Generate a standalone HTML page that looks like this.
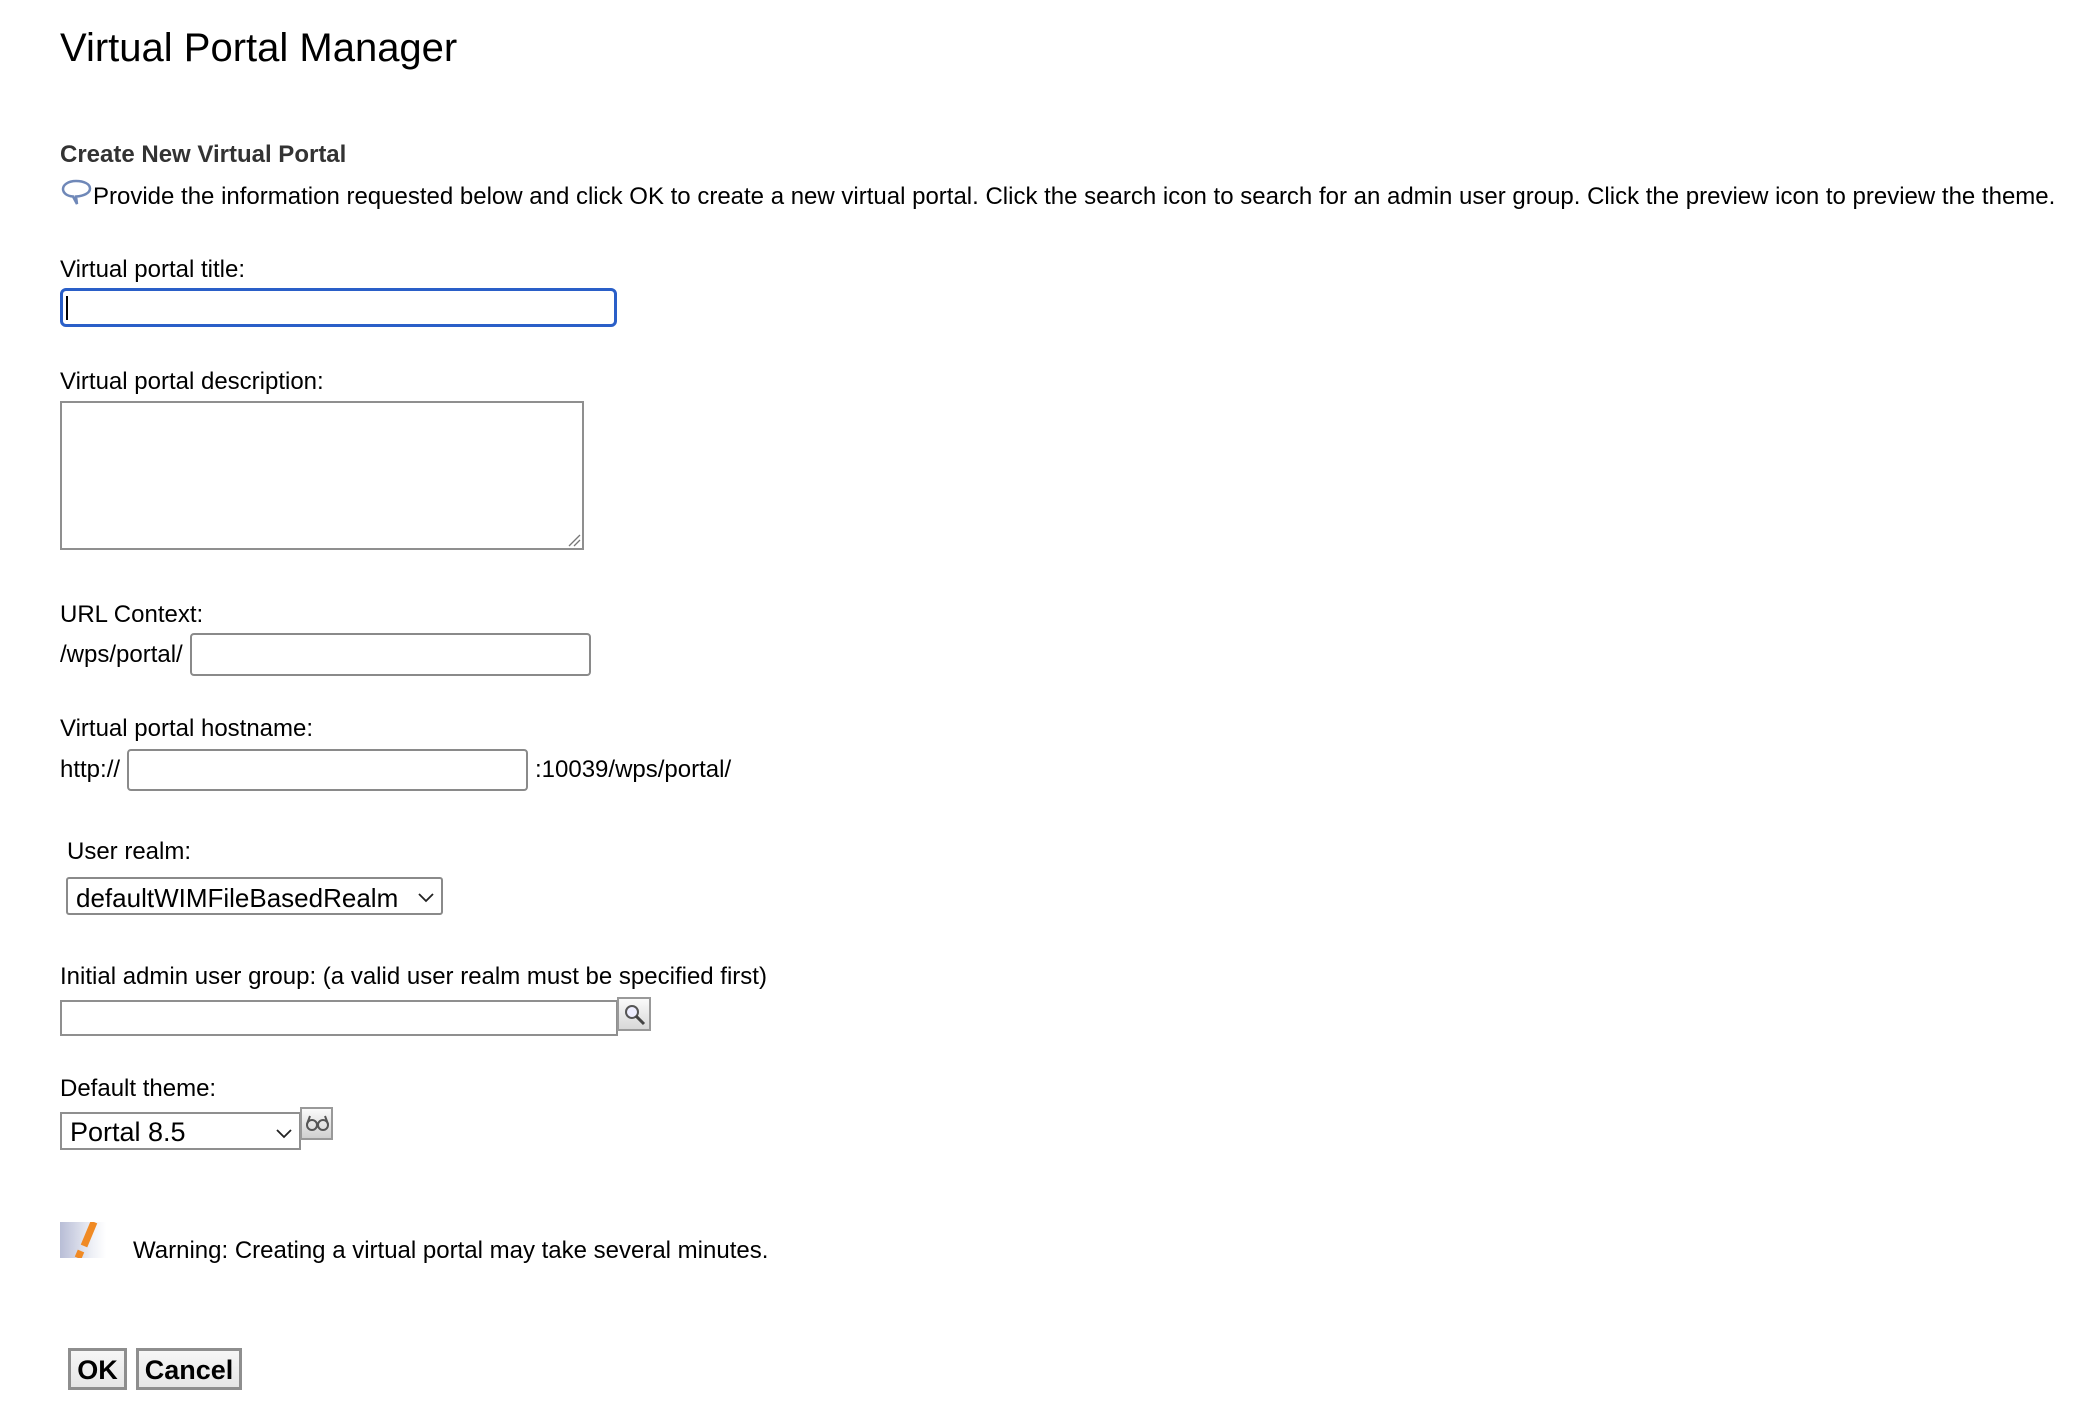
<!DOCTYPE html>
<html><head><meta charset="utf-8"><style>
html,body{margin:0;padding:0;background:#fff;width:2092px;height:1412px;overflow:hidden}
body{font-family:"Liberation Sans",Arial,sans-serif;color:#000;position:relative}
.t{position:absolute;white-space:nowrap;font-size:24px;line-height:24px}
.box{position:absolute;box-sizing:border-box;background:#fff}
.inp{border:2px solid #8a8a8a;border-radius:4px}
.sq{border:2px solid #8f8f8f}
.sel{border:2px solid #8a8a8a;border-radius:3px}
.btn{position:absolute;box-sizing:border-box;border:3px solid #8e8e8e;background:linear-gradient(#f6f6f6,#e6e6e6);font-weight:bold;font-size:27px;line-height:27px;text-align:center}
</style></head><body>
<div class="t" style="left:60px;top:28px;font-size:40px;line-height:40px">Virtual Portal Manager</div>
<div class="t" style="left:60px;top:143px;font-weight:bold;color:#333">Create New Virtual Portal</div>
<svg style="position:absolute;left:61px;top:178px" width="32" height="30" viewBox="0 0 32 30"><path d="M15 3C7 3 2 7 2 11c0 4 4 7 10 7.5L16 26l-1-7.5C23 18 29 15 29 10.5 29 6 23 3 15 3z" fill="none" stroke="#6f88b8" stroke-width="2.5"/></svg>
<div class="t" style="left:93px;top:185px">Provide the information requested below and click OK to create a new virtual portal. Click the search icon to search for an admin user group. Click the preview icon to preview the theme.</div>

<div class="t" style="left:60px;top:258px">Virtual portal title:</div>
<div class="box" style="left:60px;top:288px;width:557px;height:39px;border:3px solid #2a5fc8;border-radius:6px"><div style="position:absolute;left:3px;top:5px;width:2px;height:24px;background:#000"></div></div>

<div class="t" style="left:60px;top:370px">Virtual portal description:</div>
<div class="box sq" style="left:60px;top:401px;width:524px;height:149px">
<svg style="position:absolute;right:1px;bottom:1px" width="14" height="14"><path d="M2 13L13 2M7 13L13 7" stroke="#777" stroke-width="1.3"/></svg></div>

<div class="t" style="left:60px;top:603px">URL Context:</div>
<div class="t" style="left:60px;top:643px">/wps/portal/</div>
<div class="box inp" style="left:190px;top:633px;width:401px;height:43px"></div>

<div class="t" style="left:60px;top:717px">Virtual portal hostname:</div>
<div class="t" style="left:60px;top:758px">http://</div>
<div class="box inp" style="left:127px;top:749px;width:401px;height:42px"></div>
<div class="t" style="left:535px;top:758px">:10039/wps/portal/</div>

<div class="t" style="left:67px;top:840px">User realm:</div>
<div class="box sel" style="left:66px;top:877px;width:377px;height:38px"><div class="t" style="left:8px;top:6px;font-size:26px;line-height:27px">defaultWIMFileBasedRealm</div>
<svg style="position:absolute;right:6px;top:12px" width="18" height="12"><path d="M2 3l7 7 7-7" fill="none" stroke="#222" stroke-width="1.8"/></svg></div>

<div class="t" style="left:60px;top:965px">Initial admin user group: (a valid user realm must be specified first)</div>
<div class="box sq" style="left:60px;top:1000px;width:558px;height:36px"></div>
<div class="box" style="left:617px;top:997px;width:34px;height:34px;border:2px solid #999;background:linear-gradient(#fafafa,#d8d8d8)">
<svg style="position:absolute;left:3px;top:3px" width="26" height="26"><circle cx="10" cy="10" r="6" fill="#eef" stroke="#555" stroke-width="2"/><path d="M14 14l8 8" stroke="#444" stroke-width="3"/></svg></div>

<div class="t" style="left:60px;top:1077px">Default theme:</div>
<div class="box sq" style="left:60px;top:1112px;width:241px;height:38px"><div class="t" style="left:8px;top:5px;font-size:27px;line-height:27px">Portal 8.5</div>
<svg style="position:absolute;right:6px;top:13px" width="18" height="12"><path d="M2 3l7 7 7-7" fill="none" stroke="#222" stroke-width="1.8"/></svg></div>
<div class="box" style="left:300px;top:1107px;width:33px;height:33px;border:2px solid #999;background:linear-gradient(#fafafa,#d0d0d0)">
<svg style="position:absolute;left:2px;top:4px" width="26" height="22"><circle cx="8" cy="12" r="5" fill="none" stroke="#555" stroke-width="2"/><circle cx="19" cy="12" r="5" fill="none" stroke="#555" stroke-width="2"/><path d="M3 11L6 3M24 11L21 3" stroke="#555" stroke-width="2"/></svg></div>

<div style="position:absolute;left:60px;top:1222px;width:46px;height:36px;background:linear-gradient(90deg,#b8bdd6,#eef0f6 70%,#fff)"></div>
<svg style="position:absolute;left:60px;top:1222px" width="46" height="36"><path d="M34 0L24 24" stroke="#f08a24" stroke-width="7"/><path d="M21 29L18 36" stroke="#f08a24" stroke-width="7"/></svg>
<div class="t" style="left:133px;top:1239px">Warning: Creating a virtual portal may take several minutes.</div>

<div class="btn" style="left:68px;top:1348px;width:59px;height:42px;padding-top:6px">OK</div>
<div class="btn" style="left:136px;top:1348px;width:106px;height:42px;padding-top:6px">Cancel</div>
</body></html>
